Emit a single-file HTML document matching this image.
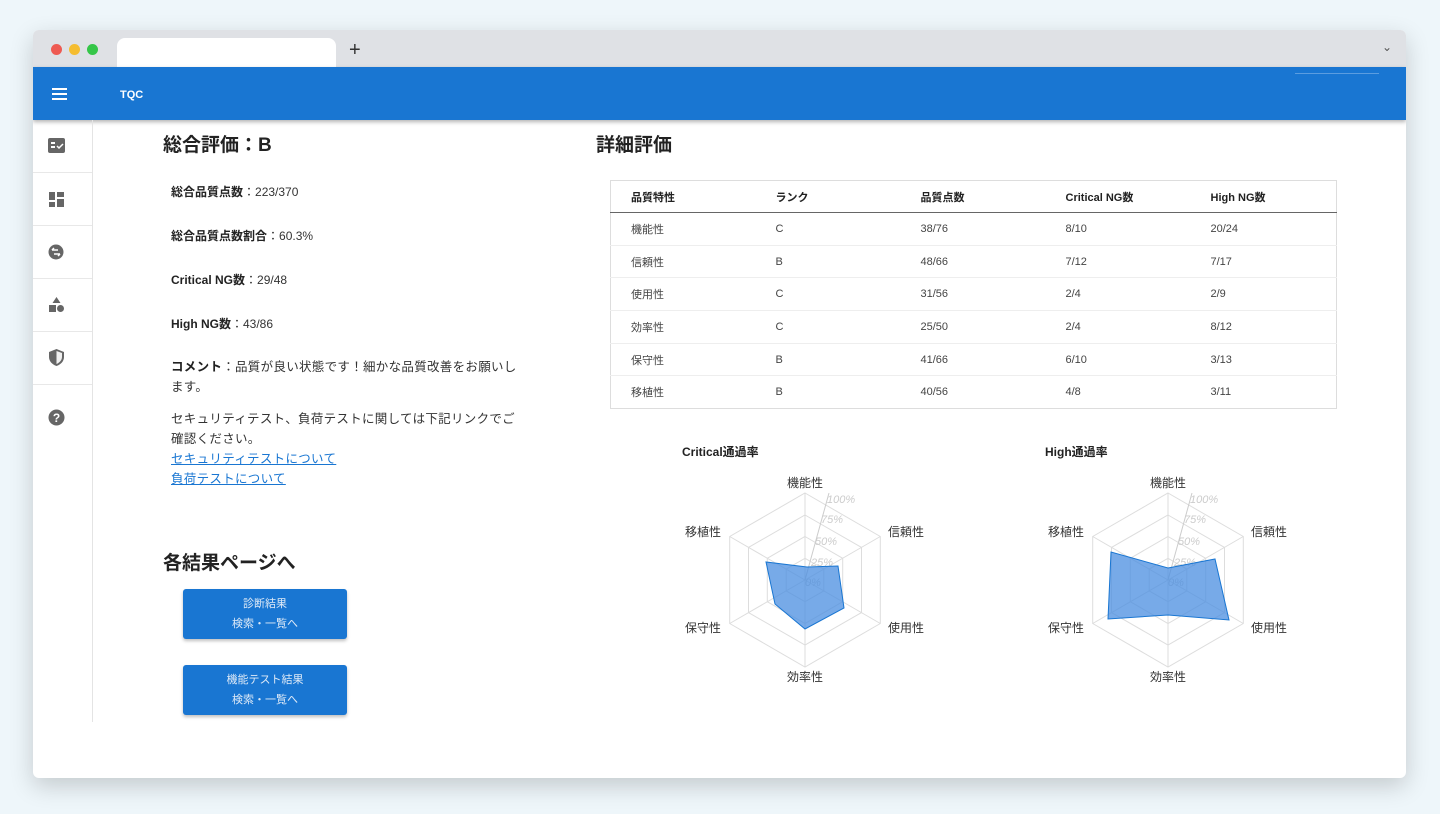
<!DOCTYPE html>
<html><head><meta charset="utf-8"><style>
*{margin:0;padding:0;box-sizing:border-box}
body{width:1440px;height:814px;background:#eef6fa;font-family:"Liberation Sans","Noto Sans CJK JP",sans-serif;position:relative;overflow:hidden;color:#222}
.win{position:absolute;left:33px;top:30px;width:1373px;height:748px;background:#fff;border-radius:6px;box-shadow:0 8px 24px rgba(0,0,0,.18);overflow:hidden}
.tabbar{position:absolute;left:0;top:0;width:100%;height:37px;background:#dfe1e5}
.dot{position:absolute;top:14px;width:11px;height:11px;border-radius:50%}
.tab{position:absolute;left:84px;top:8px;width:219px;height:29px;background:#fff;border-radius:8px 8px 0 0}
.hdr{position:absolute;left:0;top:37px;width:100%;height:53px;background:#1976d2;box-shadow:0 2px 4px rgba(0,0,0,.3)}
.side{position:absolute;left:0;top:90px;width:60px;height:602px;border-right:1px solid #e4e4e4}
.si{height:53px;border-bottom:1px solid #e8e8e8;position:relative}
.a{position:absolute;white-space:nowrap}
.t{font-size:12px;color:#333}
.t b{font-weight:bold;color:#222}
.w{font-size:12.5px;letter-spacing:0.3px}
.btn{position:absolute;left:150px;width:164px;height:50px;background:#1976d2;border-radius:3px;color:#dde9f7;font-size:11px;text-align:center;line-height:20px;padding-top:5px;box-shadow:0 2px 3px rgba(0,0,0,.25)}
table{position:absolute;left:577px;top:150px;width:727px;border:1px solid #ddd;border-collapse:collapse;font-size:11px;color:#444}
td,th{text-align:left;padding-left:20px;height:32.7px;border-bottom:1px solid #eee;font-weight:normal}
th{font-weight:bold;color:#222;border-bottom:1.5px solid #666;height:32px}
.lab{font-size:12px;fill:#333}
.tick{font-size:11px;fill:#ccc;font-style:italic}
</style></head><body>
<div class="win">
<div class="tabbar">
<div class="dot" style="left:18px;background:#ee5a52"></div>
<div class="dot" style="left:36px;background:#f5bd30"></div>
<div class="dot" style="left:54px;background:#35c648"></div>
<div class="tab"></div>
<div class="a" style="left:316px;top:9px;font-size:20px;color:#333">+</div>
<div class="a" style="left:1349px;top:10px;font-size:12px;color:#555">⌄</div>
</div>
<div class="hdr">
<div class="a" style="left:19px;top:21px;width:15px;height:2px;background:#fff;box-shadow:0 5px 0 #fff,0 10px 0 #fff"></div>
<div class="a" style="left:87px;top:22px;color:#fff;font-size:11px;font-weight:bold">TQC</div>
<div class="a" style="left:1262px;top:6px;width:84px;height:1px;background:#5b9de0"></div>
</div>
<div class="side">
<div class="si"><svg class="a" style="left:15px;top:18px" width="17" height="15"><rect width="17" height="15" rx="2" fill="#666"/><rect x="3" y="4" width="4" height="2" fill="#fff"/><rect x="3" y="8" width="4" height="2" fill="#fff"/><path d="M9 8l2 2 4-4" stroke="#fff" stroke-width="1.5" fill="none"/></svg></div>
<div class="si"><svg class="a" style="left:16px;top:19px" width="15" height="15" fill="#666"><rect width="6" height="8"/><rect y="10" width="6" height="5"/><rect x="8" width="7" height="5"/><rect x="8" y="7" width="7" height="8"/></svg></div>
<div class="si"><svg class="a" style="left:15px;top:18px" width="16" height="16"><circle cx="8" cy="8" r="7.5" fill="#666"/><path d="M4 6h6M6 10h6M4 6l2-2M12 10l-2 2" stroke="#fff" stroke-width="1.5" fill="none"/></svg></div>
<div class="si"><svg class="a" style="left:15px;top:17px" width="17" height="17" fill="#666"><path d="M8.5 1l4 6h-8z"/><rect x="1" y="9" width="7" height="7"/><circle cx="12.5" cy="12.5" r="3.5"/></svg></div>
<div class="si"><svg class="a" style="left:16px;top:17px" width="15" height="17"><path d="M7.5 0L15 3v5c0 4-3 7.5-7.5 9C3 15.5 0 12 0 8V3z" fill="#666"/><path d="M7.5 2v13c3-1.3 5.5-4 5.5-7V4z" fill="#fff" opacity=".9"/></svg></div>
<div class="si" style="border:none"><svg class="a" style="left:15px;top:24px" width="17" height="17"><circle cx="8.5" cy="8.5" r="8" fill="#666"/><text x="8.5" y="13" font-size="12" font-weight="bold" fill="#fff" text-anchor="middle" font-family="Liberation Sans">?</text></svg></div>
</div>

<div class="a" style="left:130px;top:100px;font-size:19px;font-weight:bold">総合評価：B</div>
<div class="a t" style="left:138px;top:153px"><b>総合品質点数</b>：223/370</div>
<div class="a t" style="left:138px;top:197px"><b>総合品質点数割合</b>：60.3%</div>
<div class="a t" style="left:138px;top:241px"><b>Critical NG数</b>：29/48</div>
<div class="a t" style="left:138px;top:285px"><b>High NG数</b>：43/86</div>
<div class="a t w" style="left:138px;top:327px;line-height:20px;white-space:normal;width:352px"><b>コメント</b>：品質が良い状態です！細かな品質改善をお願いします。</div>
<div class="a t w" style="left:138px;top:379px;line-height:20px;white-space:normal;width:352px">セキュリティテスト、負荷テストに関しては下記リンクでご確認ください。<br><span style="color:#1976d2;text-decoration:underline">セキュリティテストについて</span><br><span style="color:#1976d2;text-decoration:underline">負荷テストについて</span></div>
<div class="a" style="left:130px;top:518px;font-size:19px;font-weight:bold">各結果ページへ</div>
<div class="btn" style="top:559px">診断結果<br>検索・一覧へ</div>
<div class="btn" style="top:635px">機能テスト結果<br>検索・一覧へ</div>

<div class="a" style="left:563px;top:100px;font-size:19px;font-weight:bold">詳細評価</div>
<table>
<tr><th style="width:145px">品質特性</th><th style="width:145px">ランク</th><th style="width:145px">品質点数</th><th style="width:145px">Critical NG数</th><th>High NG数</th></tr>
<tr><td>機能性</td><td>C</td><td>38/76</td><td>8/10</td><td>20/24</td></tr>
<tr><td>信頼性</td><td>B</td><td>48/66</td><td>7/12</td><td>7/17</td></tr>
<tr><td>使用性</td><td>C</td><td>31/56</td><td>2/4</td><td>2/9</td></tr>
<tr><td>効率性</td><td>C</td><td>25/50</td><td>2/4</td><td>8/12</td></tr>
<tr><td>保守性</td><td>B</td><td>41/66</td><td>6/10</td><td>3/13</td></tr>
<tr><td style="border:none">移植性</td><td style="border:none">B</td><td style="border:none">40/56</td><td style="border:none">4/8</td><td style="border:none">3/11</td></tr>
</table>
</div>

<svg class="a" style="left:0;top:0" width="1440" height="814">
<defs>
<g id="grid" fill="none" stroke="#ddd" stroke-width="1">
<polygon points="0,-87 75.3,-43.5 75.3,43.5 0,87 -75.3,43.5 -75.3,-43.5"/>
<polygon points="0,-65 56.5,-32.6 56.5,32.6 0,65 -56.5,32.6 -56.5,-32.6"/>
<polygon points="0,-43.5 37.7,-21.7 37.7,21.7 0,43.5 -37.7,21.7 -37.7,-21.7"/>
<polygon points="0,-21.7 18.8,-10.9 18.8,10.9 0,21.7 -18.8,10.9 -18.8,-10.9"/>
<path d="M0,-87V87M75.3,-43.5L-75.3,43.5M75.3,43.5L-75.3,-43.5"/>
<path d="M0,0L24,-87" stroke="#ccc"/>
</g>
<g id="lbl">
<text class="lab" x="0" y="-93" text-anchor="middle">機能性</text>
<text class="lab" x="83" y="-44">信頼性</text>
<text class="lab" x="83" y="52">使用性</text>
<text class="lab" x="0" y="101" text-anchor="middle">効率性</text>
<text class="lab" x="-84" y="52" text-anchor="end">保守性</text>
<text class="lab" x="-84" y="-44" text-anchor="end">移植性</text>
<text class="tick" x="22" y="-77">100%</text>
<text class="tick" x="16" y="-57">75%</text>
<text class="tick" x="10" y="-35">50%</text>
<text class="tick" x="6" y="-14">25%</text>
<text class="tick" x="0" y="6">0%</text>
</g>
</defs>
<text x="682" y="456" font-size="12" font-weight="bold" fill="#222">Critical通過率</text>
<text x="1045" y="456" font-size="12" font-weight="bold" fill="#222">High通過率</text>
<g transform="translate(805,580)"><use href="#grid"/><use href="#lbl"/></g>
<g transform="translate(1168,580)"><use href="#grid"/><use href="#lbl"/></g>
<polygon points="807,567 838,566 844,608 805,629 775,604 766,562" fill="#4a8ee0" fill-opacity=".75" stroke="#1976d2" stroke-width="1"/>
<polygon points="1168,568 1215,559 1229,620 1168,615 1108,619 1111,552" fill="#4a8ee0" fill-opacity=".75" stroke="#1976d2" stroke-width="1"/>
</svg>
</body></html>
